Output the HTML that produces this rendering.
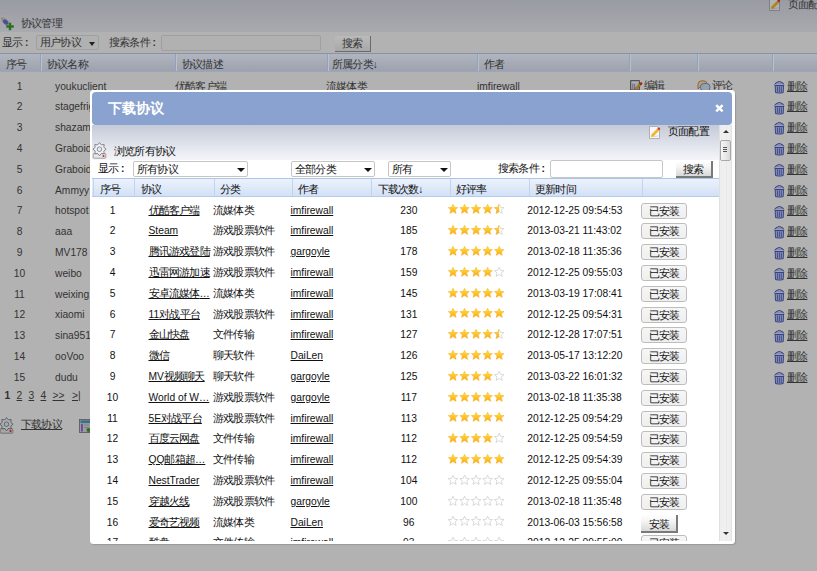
<!DOCTYPE html><html><head><meta charset="utf-8"><style>
*{margin:0;padding:0;box-sizing:border-box}
html,body{width:817px;height:571px;overflow:hidden;background:#b2b2b2;font-family:"Liberation Sans",sans-serif;font-size:10.25px;color:#333}
.k{font-size:11px;letter-spacing:-0.8px}
#mcont .k{-webkit-text-stroke:0}
#mhead .k{-webkit-text-stroke:0;font-size:inherit;letter-spacing:0}
.a{position:absolute;white-space:nowrap;line-height:13px}
.i{position:absolute;line-height:0}
.dim{filter:brightness(0.72)}
u{text-decoration:underline}
.c{margin-left:2.6px;font-weight:bold}
#topbar{position:absolute;left:0;top:0;width:817px;height:32px;background:linear-gradient(#999ba3,#a9aaaf)}
#bhead{position:absolute;left:0;top:53px;width:817px;height:19px;background:linear-gradient(#b1b5bf,#9da2ad);border-top:1px solid #8a93a6;border-bottom:1px solid #9aa6bb}
.bsep{position:absolute;top:54px;width:1px;height:17px;background:#8fa2c2;box-shadow:1px 0 0 #bcc0c8}
.bsel{position:absolute;border:1px solid #a0a0a0;background:#b1b1b1;border-radius:2px}
#modal{position:absolute;left:90px;top:90px;width:645px;height:453.5px;background:#fff;border-radius:3.5px;box-shadow:1px 1px 1px rgba(0,0,0,0.14)}
#mhead{position:absolute;left:2px;top:2px;width:640px;height:33px;background:#8aa2d0;border-radius:4px}
#mcont{position:absolute;left:2px;top:35px;width:627px;height:416px;overflow:hidden;background:#fff;color:#111}
#grad{position:absolute;left:0;top:0;width:627px;height:35px;background:linear-gradient(#c5cad8,#e6e9f0 70%,#f4f5f8)}
#sb{position:absolute;left:629px;top:35px;width:13px;height:415.5px;background:linear-gradient(90deg,#e0e0e0 0,#e0e0e0 1px,#eeeeee 1px,#f0f0f0 7px,#e8e8e8 7px,#e8e8e8 8px,#f0f0f0 8px,#ececec 12px,#e2e2e2 12px)}
#mth{position:absolute;left:0;top:53px;width:627px;height:19px;background:linear-gradient(#ecf2fc,#d2e1f6);border-top:1px solid #adc6ec;border-bottom:1px solid #b5cbee}
.msep{position:absolute;top:54px;width:1px;height:17px;background:#c2d3ee}
.sel{position:absolute;border:1px solid #c6c6c6;background:#fff;border-radius:2px;height:16px}
.arr{position:absolute;width:0;height:0;border-left:4px solid transparent;border-right:4px solid transparent;border-top:4px solid #111}
.btn1{position:absolute;width:46px;height:16px;border:1px solid #bdbdbd;border-radius:3px;background:linear-gradient(#f6f6f6,#efefef);color:#111;text-align:center;line-height:14px}
.btn2{position:absolute;height:18px;background:linear-gradient(#ffffff,#f4f4f4 40%,#d9d9d9);border-right:2px solid #7a7a7a;border-bottom:2px solid #7a7a7a;color:#111;text-align:center;line-height:18px}
</style></head><body>
<svg width="0" height="0" style="position:absolute"><defs><linearGradient id="sg" x1="0" y1="0" x2="0" y2="1"><stop offset="0" stop-color="#ffe83c"/><stop offset="1" stop-color="#ffa21a"/></linearGradient><clipPath id="hc"><rect x="-1" y="0" width="6" height="10"/></clipPath></defs></svg>
<div id="topbar"></div>
<div class="i dim" style="left:0;top:12px"><svg width="16" height="20" viewBox="0 0 16 20"><path d="M0.3,5.5 L1.8,4 L5,4.2 L11.5,10.5 L6.5,15.5 L0.3,9 Z" fill="#d8d8d0" stroke="#efefe6" stroke-width="0.9"/><circle cx="2.2" cy="6.6" r="0.9" fill="#aaa"/><ellipse cx="5.6" cy="10" rx="3.2" ry="2.1" transform="rotate(45 5.6 10)" fill="#6f68e0"/><path d="M6.3,14.5 H13.8 M10,10.8 V18.2" stroke="#3f9a2c" stroke-width="2.4"/></svg></div>
<div class="a" style="left:21px;top:17px"><span class="k">协议管理</span></div>
<div class="i dim" style="left:769px;top:-2px"><svg width="12" height="13" viewBox="0 0 12 13"><path d="M0.5,0.5 H8 L10.5,3 V12.5 H0.5 Z" fill="#f7f8fb" stroke="#a2a2a2" stroke-width="0.8"/><path d="M3,11 L9.5,9.8" stroke="#c8ccd8" stroke-width="0.8"/><path d="M2.2,10.8 L2.9,8.4 L8.3,3 L9.9,4.6 L4.5,10 Z" fill="#f8b81c" stroke="#e09a10" stroke-width="0.5"/><path d="M2.2,10.8 L2.6,9.5 L3.5,10.4 Z" fill="#e8e070"/><circle cx="9.8" cy="2.8" r="1.3" fill="#e03030"/></svg></div>
<div class="a" style="left:788px;top:-2.5px"><span class="k">页面配置</span></div>
<div class="a" style="left:2px;top:36px"><span class="k">显示</span><span class="c">:</span></div>
<div class="bsel" style="left:36px;top:35px;width:63px;height:15px"></div><div class="a" style="left:40px;top:36px"><span class="k">用户协议</span></div><div class="arr" style="left:89px;top:42px;border-top-color:#222;border-left-width:3.5px;border-right-width:3.5px"></div>
<div class="a" style="left:109px;top:36px"><span class="k">搜索条件</span><span class="c">:</span></div>
<div class="bsel" style="left:161px;top:35px;width:160px;height:16px"></div>
<div class="a" style="left:335px;top:36px;width:36px;height:16px;background:linear-gradient(#bababa,#a8a8a8);border-right:1px solid #6a6a6a;border-bottom:1px solid #6a6a6a;text-align:center;line-height:15px"><span class="k">搜索</span></div>
<div id="bhead"></div>
<div class="bsep" style="left:40px"></div>
<div class="bsep" style="left:175px"></div>
<div class="bsep" style="left:326.5px"></div>
<div class="bsep" style="left:477px"></div>
<div class="bsep" style="left:628.5px"></div>
<div class="bsep" style="left:696.5px"></div>
<div class="bsep" style="left:772px"></div>
<div class="a" style="left:6px;top:57.5px"><span class="k">序号</span></div>
<div class="a" style="left:47px;top:57.5px"><span class="k">协议名称</span></div>
<div class="a" style="left:182px;top:57.5px"><span class="k">协议描述</span></div>
<div class="a" style="left:332px;top:57.5px"><span class="k">所属分类</span>↓</div>
<div class="a" style="left:484px;top:57.5px"><span class="k">作者</span></div>
<div class="a" style="left:0;width:39px;text-align:center;top:79.60px">1</div>
<div class="a" style="left:55px;top:79.60px">youkuclient</div>
<div class="i dim" style="left:773.8px;top:80.80px"><svg width="11" height="13" viewBox="0 0 11 13"><path d="M0.8,4.3 Q0.8,1.6 3.5,1.1 Q4.2,0.3 5.3,0.3 Q6.4,0.3 7,1.1 Q9.8,1.6 9.9,4.3 Z" fill="#b9c2ee" stroke="#3c4cb4" stroke-width="0.9"/><path d="M0.9,3.6 H9.8" stroke="#f4f6ff" stroke-width="0.8"/><path d="M1.2,4.6 L9.5,4.6 L9.2,11.6 Q5.3,12.6 1.5,11.6 Z" fill="#c4ccf2" stroke="#3c4cb4" stroke-width="0.9"/><path d="M3.4,5.5 V11 M5.35,5.5 V11.3 M7.3,5.5 V11" stroke="#4a5ac8" stroke-width="0.9"/></svg></div>
<div class="a" style="left:787px;top:79.60px"><u><span class="k">删除</span></u></div>
<div class="a" style="left:0;width:39px;text-align:center;top:100.40px">2</div>
<div class="a" style="left:55px;top:100.40px">stagefright</div>
<div class="i dim" style="left:773.8px;top:101.60px"><svg width="11" height="13" viewBox="0 0 11 13"><path d="M0.8,4.3 Q0.8,1.6 3.5,1.1 Q4.2,0.3 5.3,0.3 Q6.4,0.3 7,1.1 Q9.8,1.6 9.9,4.3 Z" fill="#b9c2ee" stroke="#3c4cb4" stroke-width="0.9"/><path d="M0.9,3.6 H9.8" stroke="#f4f6ff" stroke-width="0.8"/><path d="M1.2,4.6 L9.5,4.6 L9.2,11.6 Q5.3,12.6 1.5,11.6 Z" fill="#c4ccf2" stroke="#3c4cb4" stroke-width="0.9"/><path d="M3.4,5.5 V11 M5.35,5.5 V11.3 M7.3,5.5 V11" stroke="#4a5ac8" stroke-width="0.9"/></svg></div>
<div class="a" style="left:787px;top:100.40px"><u><span class="k">删除</span></u></div>
<div class="a" style="left:0;width:39px;text-align:center;top:121.20px">3</div>
<div class="a" style="left:55px;top:121.20px">shazam</div>
<div class="i dim" style="left:773.8px;top:122.40px"><svg width="11" height="13" viewBox="0 0 11 13"><path d="M0.8,4.3 Q0.8,1.6 3.5,1.1 Q4.2,0.3 5.3,0.3 Q6.4,0.3 7,1.1 Q9.8,1.6 9.9,4.3 Z" fill="#b9c2ee" stroke="#3c4cb4" stroke-width="0.9"/><path d="M0.9,3.6 H9.8" stroke="#f4f6ff" stroke-width="0.8"/><path d="M1.2,4.6 L9.5,4.6 L9.2,11.6 Q5.3,12.6 1.5,11.6 Z" fill="#c4ccf2" stroke="#3c4cb4" stroke-width="0.9"/><path d="M3.4,5.5 V11 M5.35,5.5 V11.3 M7.3,5.5 V11" stroke="#4a5ac8" stroke-width="0.9"/></svg></div>
<div class="a" style="left:787px;top:121.20px"><u><span class="k">删除</span></u></div>
<div class="a" style="left:0;width:39px;text-align:center;top:142.00px">4</div>
<div class="a" style="left:55px;top:142.00px">Graboid</div>
<div class="i dim" style="left:773.8px;top:143.20px"><svg width="11" height="13" viewBox="0 0 11 13"><path d="M0.8,4.3 Q0.8,1.6 3.5,1.1 Q4.2,0.3 5.3,0.3 Q6.4,0.3 7,1.1 Q9.8,1.6 9.9,4.3 Z" fill="#b9c2ee" stroke="#3c4cb4" stroke-width="0.9"/><path d="M0.9,3.6 H9.8" stroke="#f4f6ff" stroke-width="0.8"/><path d="M1.2,4.6 L9.5,4.6 L9.2,11.6 Q5.3,12.6 1.5,11.6 Z" fill="#c4ccf2" stroke="#3c4cb4" stroke-width="0.9"/><path d="M3.4,5.5 V11 M5.35,5.5 V11.3 M7.3,5.5 V11" stroke="#4a5ac8" stroke-width="0.9"/></svg></div>
<div class="a" style="left:787px;top:142.00px"><u><span class="k">删除</span></u></div>
<div class="a" style="left:0;width:39px;text-align:center;top:162.80px">5</div>
<div class="a" style="left:55px;top:162.80px">Graboid</div>
<div class="i dim" style="left:773.8px;top:164.00px"><svg width="11" height="13" viewBox="0 0 11 13"><path d="M0.8,4.3 Q0.8,1.6 3.5,1.1 Q4.2,0.3 5.3,0.3 Q6.4,0.3 7,1.1 Q9.8,1.6 9.9,4.3 Z" fill="#b9c2ee" stroke="#3c4cb4" stroke-width="0.9"/><path d="M0.9,3.6 H9.8" stroke="#f4f6ff" stroke-width="0.8"/><path d="M1.2,4.6 L9.5,4.6 L9.2,11.6 Q5.3,12.6 1.5,11.6 Z" fill="#c4ccf2" stroke="#3c4cb4" stroke-width="0.9"/><path d="M3.4,5.5 V11 M5.35,5.5 V11.3 M7.3,5.5 V11" stroke="#4a5ac8" stroke-width="0.9"/></svg></div>
<div class="a" style="left:787px;top:162.80px"><u><span class="k">删除</span></u></div>
<div class="a" style="left:0;width:39px;text-align:center;top:183.60px">6</div>
<div class="a" style="left:55px;top:183.60px">Ammyy</div>
<div class="i dim" style="left:773.8px;top:184.80px"><svg width="11" height="13" viewBox="0 0 11 13"><path d="M0.8,4.3 Q0.8,1.6 3.5,1.1 Q4.2,0.3 5.3,0.3 Q6.4,0.3 7,1.1 Q9.8,1.6 9.9,4.3 Z" fill="#b9c2ee" stroke="#3c4cb4" stroke-width="0.9"/><path d="M0.9,3.6 H9.8" stroke="#f4f6ff" stroke-width="0.8"/><path d="M1.2,4.6 L9.5,4.6 L9.2,11.6 Q5.3,12.6 1.5,11.6 Z" fill="#c4ccf2" stroke="#3c4cb4" stroke-width="0.9"/><path d="M3.4,5.5 V11 M5.35,5.5 V11.3 M7.3,5.5 V11" stroke="#4a5ac8" stroke-width="0.9"/></svg></div>
<div class="a" style="left:787px;top:183.60px"><u><span class="k">删除</span></u></div>
<div class="a" style="left:0;width:39px;text-align:center;top:204.40px">7</div>
<div class="a" style="left:55px;top:204.40px">hotspot</div>
<div class="i dim" style="left:773.8px;top:205.60px"><svg width="11" height="13" viewBox="0 0 11 13"><path d="M0.8,4.3 Q0.8,1.6 3.5,1.1 Q4.2,0.3 5.3,0.3 Q6.4,0.3 7,1.1 Q9.8,1.6 9.9,4.3 Z" fill="#b9c2ee" stroke="#3c4cb4" stroke-width="0.9"/><path d="M0.9,3.6 H9.8" stroke="#f4f6ff" stroke-width="0.8"/><path d="M1.2,4.6 L9.5,4.6 L9.2,11.6 Q5.3,12.6 1.5,11.6 Z" fill="#c4ccf2" stroke="#3c4cb4" stroke-width="0.9"/><path d="M3.4,5.5 V11 M5.35,5.5 V11.3 M7.3,5.5 V11" stroke="#4a5ac8" stroke-width="0.9"/></svg></div>
<div class="a" style="left:787px;top:204.40px"><u><span class="k">删除</span></u></div>
<div class="a" style="left:0;width:39px;text-align:center;top:225.20px">8</div>
<div class="a" style="left:55px;top:225.20px">aaa</div>
<div class="i dim" style="left:773.8px;top:226.40px"><svg width="11" height="13" viewBox="0 0 11 13"><path d="M0.8,4.3 Q0.8,1.6 3.5,1.1 Q4.2,0.3 5.3,0.3 Q6.4,0.3 7,1.1 Q9.8,1.6 9.9,4.3 Z" fill="#b9c2ee" stroke="#3c4cb4" stroke-width="0.9"/><path d="M0.9,3.6 H9.8" stroke="#f4f6ff" stroke-width="0.8"/><path d="M1.2,4.6 L9.5,4.6 L9.2,11.6 Q5.3,12.6 1.5,11.6 Z" fill="#c4ccf2" stroke="#3c4cb4" stroke-width="0.9"/><path d="M3.4,5.5 V11 M5.35,5.5 V11.3 M7.3,5.5 V11" stroke="#4a5ac8" stroke-width="0.9"/></svg></div>
<div class="a" style="left:787px;top:225.20px"><u><span class="k">删除</span></u></div>
<div class="a" style="left:0;width:39px;text-align:center;top:246.00px">9</div>
<div class="a" style="left:55px;top:246.00px">MV178</div>
<div class="i dim" style="left:773.8px;top:247.20px"><svg width="11" height="13" viewBox="0 0 11 13"><path d="M0.8,4.3 Q0.8,1.6 3.5,1.1 Q4.2,0.3 5.3,0.3 Q6.4,0.3 7,1.1 Q9.8,1.6 9.9,4.3 Z" fill="#b9c2ee" stroke="#3c4cb4" stroke-width="0.9"/><path d="M0.9,3.6 H9.8" stroke="#f4f6ff" stroke-width="0.8"/><path d="M1.2,4.6 L9.5,4.6 L9.2,11.6 Q5.3,12.6 1.5,11.6 Z" fill="#c4ccf2" stroke="#3c4cb4" stroke-width="0.9"/><path d="M3.4,5.5 V11 M5.35,5.5 V11.3 M7.3,5.5 V11" stroke="#4a5ac8" stroke-width="0.9"/></svg></div>
<div class="a" style="left:787px;top:246.00px"><u><span class="k">删除</span></u></div>
<div class="a" style="left:0;width:39px;text-align:center;top:266.80px">10</div>
<div class="a" style="left:55px;top:266.80px">weibo</div>
<div class="i dim" style="left:773.8px;top:268.00px"><svg width="11" height="13" viewBox="0 0 11 13"><path d="M0.8,4.3 Q0.8,1.6 3.5,1.1 Q4.2,0.3 5.3,0.3 Q6.4,0.3 7,1.1 Q9.8,1.6 9.9,4.3 Z" fill="#b9c2ee" stroke="#3c4cb4" stroke-width="0.9"/><path d="M0.9,3.6 H9.8" stroke="#f4f6ff" stroke-width="0.8"/><path d="M1.2,4.6 L9.5,4.6 L9.2,11.6 Q5.3,12.6 1.5,11.6 Z" fill="#c4ccf2" stroke="#3c4cb4" stroke-width="0.9"/><path d="M3.4,5.5 V11 M5.35,5.5 V11.3 M7.3,5.5 V11" stroke="#4a5ac8" stroke-width="0.9"/></svg></div>
<div class="a" style="left:787px;top:266.80px"><u><span class="k">删除</span></u></div>
<div class="a" style="left:0;width:39px;text-align:center;top:287.60px">11</div>
<div class="a" style="left:55px;top:287.60px">weixing</div>
<div class="i dim" style="left:773.8px;top:288.80px"><svg width="11" height="13" viewBox="0 0 11 13"><path d="M0.8,4.3 Q0.8,1.6 3.5,1.1 Q4.2,0.3 5.3,0.3 Q6.4,0.3 7,1.1 Q9.8,1.6 9.9,4.3 Z" fill="#b9c2ee" stroke="#3c4cb4" stroke-width="0.9"/><path d="M0.9,3.6 H9.8" stroke="#f4f6ff" stroke-width="0.8"/><path d="M1.2,4.6 L9.5,4.6 L9.2,11.6 Q5.3,12.6 1.5,11.6 Z" fill="#c4ccf2" stroke="#3c4cb4" stroke-width="0.9"/><path d="M3.4,5.5 V11 M5.35,5.5 V11.3 M7.3,5.5 V11" stroke="#4a5ac8" stroke-width="0.9"/></svg></div>
<div class="a" style="left:787px;top:287.60px"><u><span class="k">删除</span></u></div>
<div class="a" style="left:0;width:39px;text-align:center;top:308.40px">12</div>
<div class="a" style="left:55px;top:308.40px">xiaomi</div>
<div class="i dim" style="left:773.8px;top:309.60px"><svg width="11" height="13" viewBox="0 0 11 13"><path d="M0.8,4.3 Q0.8,1.6 3.5,1.1 Q4.2,0.3 5.3,0.3 Q6.4,0.3 7,1.1 Q9.8,1.6 9.9,4.3 Z" fill="#b9c2ee" stroke="#3c4cb4" stroke-width="0.9"/><path d="M0.9,3.6 H9.8" stroke="#f4f6ff" stroke-width="0.8"/><path d="M1.2,4.6 L9.5,4.6 L9.2,11.6 Q5.3,12.6 1.5,11.6 Z" fill="#c4ccf2" stroke="#3c4cb4" stroke-width="0.9"/><path d="M3.4,5.5 V11 M5.35,5.5 V11.3 M7.3,5.5 V11" stroke="#4a5ac8" stroke-width="0.9"/></svg></div>
<div class="a" style="left:787px;top:308.40px"><u><span class="k">删除</span></u></div>
<div class="a" style="left:0;width:39px;text-align:center;top:329.20px">13</div>
<div class="a" style="left:55px;top:329.20px">sina951</div>
<div class="i dim" style="left:773.8px;top:330.40px"><svg width="11" height="13" viewBox="0 0 11 13"><path d="M0.8,4.3 Q0.8,1.6 3.5,1.1 Q4.2,0.3 5.3,0.3 Q6.4,0.3 7,1.1 Q9.8,1.6 9.9,4.3 Z" fill="#b9c2ee" stroke="#3c4cb4" stroke-width="0.9"/><path d="M0.9,3.6 H9.8" stroke="#f4f6ff" stroke-width="0.8"/><path d="M1.2,4.6 L9.5,4.6 L9.2,11.6 Q5.3,12.6 1.5,11.6 Z" fill="#c4ccf2" stroke="#3c4cb4" stroke-width="0.9"/><path d="M3.4,5.5 V11 M5.35,5.5 V11.3 M7.3,5.5 V11" stroke="#4a5ac8" stroke-width="0.9"/></svg></div>
<div class="a" style="left:787px;top:329.20px"><u><span class="k">删除</span></u></div>
<div class="a" style="left:0;width:39px;text-align:center;top:350.00px">14</div>
<div class="a" style="left:55px;top:350.00px">ooVoo</div>
<div class="i dim" style="left:773.8px;top:351.20px"><svg width="11" height="13" viewBox="0 0 11 13"><path d="M0.8,4.3 Q0.8,1.6 3.5,1.1 Q4.2,0.3 5.3,0.3 Q6.4,0.3 7,1.1 Q9.8,1.6 9.9,4.3 Z" fill="#b9c2ee" stroke="#3c4cb4" stroke-width="0.9"/><path d="M0.9,3.6 H9.8" stroke="#f4f6ff" stroke-width="0.8"/><path d="M1.2,4.6 L9.5,4.6 L9.2,11.6 Q5.3,12.6 1.5,11.6 Z" fill="#c4ccf2" stroke="#3c4cb4" stroke-width="0.9"/><path d="M3.4,5.5 V11 M5.35,5.5 V11.3 M7.3,5.5 V11" stroke="#4a5ac8" stroke-width="0.9"/></svg></div>
<div class="a" style="left:787px;top:350.00px"><u><span class="k">删除</span></u></div>
<div class="a" style="left:0;width:39px;text-align:center;top:370.80px">15</div>
<div class="a" style="left:55px;top:370.80px">dudu</div>
<div class="i dim" style="left:773.8px;top:372.00px"><svg width="11" height="13" viewBox="0 0 11 13"><path d="M0.8,4.3 Q0.8,1.6 3.5,1.1 Q4.2,0.3 5.3,0.3 Q6.4,0.3 7,1.1 Q9.8,1.6 9.9,4.3 Z" fill="#b9c2ee" stroke="#3c4cb4" stroke-width="0.9"/><path d="M0.9,3.6 H9.8" stroke="#f4f6ff" stroke-width="0.8"/><path d="M1.2,4.6 L9.5,4.6 L9.2,11.6 Q5.3,12.6 1.5,11.6 Z" fill="#c4ccf2" stroke="#3c4cb4" stroke-width="0.9"/><path d="M3.4,5.5 V11 M5.35,5.5 V11.3 M7.3,5.5 V11" stroke="#4a5ac8" stroke-width="0.9"/></svg></div>
<div class="a" style="left:787px;top:370.80px"><u><span class="k">删除</span></u></div>
<div class="a" style="left:175px;top:79.6px"><span class="k">优酷客户端</span></div><div class="a" style="left:326px;top:79.6px"><span class="k">流媒体类</span></div><div class="a" style="left:477px;top:79.6px">imfirewall</div>
<div class="i dim" style="left:629.5px;top:80.3px"><svg width="14" height="11" viewBox="0 0 14 11"><rect x="0.7" y="0.7" width="8.6" height="9.3" fill="#e4e6ee" stroke="#4a4a4a" stroke-width="0.9"/><path d="M1.6,2.3 H8.4" stroke="#fafafa" stroke-width="0.9"/><path d="M2.8,3.5 V9.5 M4.5,4 V9.5" stroke="#8f86d8" stroke-width="0.9"/><path d="M4.6,10.3 L5.1,8.3 L9.8,3.6 L11.2,5 L6.5,9.7 Z" fill="#f0b020" stroke="#a07010" stroke-width="0.5"/><circle cx="11" cy="3.6" r="1.3" fill="#e02a2a"/></svg></div><div class="a" style="left:643.5px;top:79px"><span class="k">编辑</span></div>
<div class="i dim" style="left:696.5px;top:79.5px"><svg width="14" height="12" viewBox="0 0 14 12"><path d="M1,9 V4 Q1,0.8 5,0.8 H6.5 Q10,0.8 10,4 V6 H4 L1,9 Z" fill="#f0e2b0" stroke="#e07a40" stroke-width="0.9"/><rect x="3.5" y="3.5" width="9.5" height="7.5" rx="3.5" fill="#cfe0ee" stroke="#5a90d0" stroke-width="0.9"/></svg></div><div class="a" style="left:711.5px;top:79px"><span class="k">评论</span></div>
<div class="a" style="left:4.5px;top:388.5px"><b>1</b></div>
<div class="a" style="left:16.5px;top:388.5px"><u>2</u></div>
<div class="a" style="left:28.5px;top:388.5px"><u>3</u></div>
<div class="a" style="left:40.5px;top:388.5px"><u>4</u></div>
<div class="a" style="left:52.5px;top:388.5px"><u>&gt;&gt;</u></div>
<div class="a" style="left:72px;top:388.5px"><u>&gt;|</u></div>
<div class="i dim" style="left:-1px;top:417px"><svg width="16" height="17" viewBox="0 0 16 17"><rect x="1.2" y="11.6" width="12.6" height="4.6" rx="0.8" fill="#e8e8e8" stroke="#8a8a8a" stroke-width="0.8"/><circle cx="11.5" cy="14" r="1.1" fill="#e02828"/><polygon points="7.50,0.60 9.30,2.86 12.17,2.53 11.84,5.40 14.10,7.20 11.84,9.00 12.17,11.87 9.30,11.54 7.50,13.80 5.70,11.54 2.83,11.87 3.16,9.00 0.90,7.20 3.16,5.40 2.83,2.53 5.70,2.86" fill="#eef1f9" stroke="#6e6e6e" stroke-width="0.8" stroke-linejoin="round"/><circle cx="7.5" cy="7.2" r="2.3" fill="#e4eaf8" stroke="#7a7a7a" stroke-width="0.8"/></svg></div>
<div class="a" style="left:21px;top:417.5px"><u><span class="k">下载协议</span></u></div>
<div class="i dim" style="left:79px;top:419px"><svg width="12" height="14" viewBox="0 0 12 14"><rect x="0.5" y="0.5" width="11" height="13" fill="#d7d7d7" stroke="#777" stroke-width="0.8"/><rect x="1.5" y="1.3" width="9.5" height="2.8" fill="#4aa0c0"/><rect x="2" y="5" width="1.8" height="7.5" fill="#9560e0"/><path d="M5,6 H10 M5,8.5 H10" stroke="#aaa" stroke-width="0.8"/><circle cx="9.5" cy="11" r="2" fill="#3a9a3a"/></svg></div>
<div id="modal">
<div id="mhead"><div class="a" style="left:16px;top:8px;font-size:14.2px;font-weight:bold;color:#fff;line-height:17px"><span class="k">下载协议</span></div><svg style="position:absolute;left:622.5px;top:12px" width="9" height="9" viewBox="0 0 9 9"><path d="M1.2,1.2 L7.6,7.3 M7.6,1.2 L1.2,7.3" stroke="#fff" stroke-width="2.5"/></svg></div>
<div id="mcont"><div id="grad"></div>
<div class="i" style="left:557px;top:1px"><svg width="12" height="13" viewBox="0 0 12 13"><path d="M0.5,0.5 H8 L10.5,3 V12.5 H0.5 Z" fill="#f7f8fb" stroke="#a2a2a2" stroke-width="0.8"/><path d="M3,11 L9.5,9.8" stroke="#c8ccd8" stroke-width="0.8"/><path d="M2.2,10.8 L2.9,8.4 L8.3,3 L9.9,4.6 L4.5,10 Z" fill="#f8b81c" stroke="#e09a10" stroke-width="0.5"/><path d="M2.2,10.8 L2.6,9.5 L3.5,10.4 Z" fill="#e8e070"/><circle cx="9.8" cy="2.8" r="1.3" fill="#e03030"/></svg></div>
<div class="a" style="left:576px;top:-0.5px"><span class="k">页面配置</span></div>
<div class="i" style="left:0px;top:17px"><svg width="16" height="17" viewBox="0 0 16 17"><rect x="1.2" y="11.6" width="12.6" height="4.6" rx="0.8" fill="#e8e8e8" stroke="#8a8a8a" stroke-width="0.8"/><circle cx="11.5" cy="14" r="1.1" fill="#e02828"/><polygon points="7.50,0.60 9.30,2.86 12.17,2.53 11.84,5.40 14.10,7.20 11.84,9.00 12.17,11.87 9.30,11.54 7.50,13.80 5.70,11.54 2.83,11.87 3.16,9.00 0.90,7.20 3.16,5.40 2.83,2.53 5.70,2.86" fill="#eef1f9" stroke="#6e6e6e" stroke-width="0.8" stroke-linejoin="round"/><circle cx="7.5" cy="7.2" r="2.3" fill="#e4eaf8" stroke="#7a7a7a" stroke-width="0.8"/></svg></div>
<div class="a" style="left:22px;top:19.5px"><span class="k">浏览所有协议</span></div>
<div class="a" style="left:6px;top:36.5px"><span class="k">显示</span><span class="c">:</span></div>
<div class="sel" style="left:41px;top:36px;width:115px"></div><div class="a" style="left:45px;top:38px"><span class="k">所有协议</span></div><div class="arr" style="left:145px;top:43px"></div>
<div class="sel" style="left:198.5px;top:36px;width:84px"></div><div class="a" style="left:203px;top:38px"><span class="k">全部分类</span></div><div class="arr" style="left:272px;top:43px"></div>
<div class="sel" style="left:296px;top:36px;width:63px"></div><div class="a" style="left:300px;top:38px"><span class="k">所有</span></div><div class="arr" style="left:348px;top:43px"></div>
<div class="a" style="left:406px;top:36.5px"><span class="k">搜索条件</span><span class="c">:</span></div>
<div class="sel" style="left:458px;top:35px;width:113px;height:18px"></div>
<div class="btn2" style="left:584px;top:36px;width:37px;height:17px;line-height:17px"><span class="k">搜索</span></div>
<div id="mth"></div>
<div class="msep" style="left:1px"></div>
<div class="msep" style="left:42px"></div>
<div class="msep" style="left:122px"></div>
<div class="msep" style="left:200px"></div>
<div class="msep" style="left:279px"></div>
<div class="msep" style="left:358px"></div>
<div class="msep" style="left:437px"></div>
<div class="msep" style="left:550px"></div>
<div class="a" style="left:8px;top:57.5px"><span class="k">序号</span></div>
<div class="a" style="left:48.5px;top:57.5px"><span class="k">协议</span></div>
<div class="a" style="left:128px;top:57.5px"><span class="k">分类</span></div>
<div class="a" style="left:206px;top:57.5px"><span class="k">作者</span></div>
<div class="a" style="left:285.5px;top:57.5px"><span class="k">下载次数</span>↓</div>
<div class="a" style="left:364px;top:57.5px"><span class="k">好评率</span></div>
<div class="a" style="left:443px;top:57.5px"><span class="k">更新时间</span></div>
<div class="a" style="left:0;width:41px;text-align:center;top:78.50px">1</div>
<div class="a" style="left:56.5px;top:78.50px"><u><span class="k">优酷客户端</span></u></div>
<div class="a" style="left:121px;top:78.50px"><span class="k">流媒体类</span></div>
<div class="a" style="left:198.5px;top:78.50px"><u>imfirewall</u></div>
<div class="a" style="left:286.8px;width:60px;text-align:center;top:78.50px">230</div>
<div class="i" style="left:355.5px;top:79.30px"><svg width="58" height="10" viewBox="0 0 58 10"><polygon transform="translate(0.00,0)" points="5,0.2 6.4,3.3 9.8,3.6 7.2,5.9 8.1,9.4 5,7.6 1.9,9.4 2.8,5.9 0.2,3.6 3.6,3.3" fill="url(#sg)" stroke="#f5b324" stroke-width="0.5"/><polygon transform="translate(11.55,0)" points="5,0.2 6.4,3.3 9.8,3.6 7.2,5.9 8.1,9.4 5,7.6 1.9,9.4 2.8,5.9 0.2,3.6 3.6,3.3" fill="url(#sg)" stroke="#f5b324" stroke-width="0.5"/><polygon transform="translate(23.10,0)" points="5,0.2 6.4,3.3 9.8,3.6 7.2,5.9 8.1,9.4 5,7.6 1.9,9.4 2.8,5.9 0.2,3.6 3.6,3.3" fill="url(#sg)" stroke="#f5b324" stroke-width="0.5"/><polygon transform="translate(34.65,0)" points="5,0.2 6.4,3.3 9.8,3.6 7.2,5.9 8.1,9.4 5,7.6 1.9,9.4 2.8,5.9 0.2,3.6 3.6,3.3" fill="url(#sg)" stroke="#f5b324" stroke-width="0.5"/><polygon transform="translate(46.20,0)" points="5,0.2 6.4,3.3 9.8,3.6 7.2,5.9 8.1,9.4 5,7.6 1.9,9.4 2.8,5.9 0.2,3.6 3.6,3.3" fill="#fff" stroke="#c9cdcd" stroke-width="0.7"/><polygon transform="translate(46.20,0)" points="5,0.2 6.4,3.3 9.8,3.6 7.2,5.9 8.1,9.4 5,7.6 1.9,9.4 2.8,5.9 0.2,3.6 3.6,3.3" fill="url(#sg)" stroke="#f5b324" stroke-width="0.5" clip-path="url(#hc)"/></svg></div>
<div class="a" style="left:435.3px;top:78.50px">2012-12-25 09:54:53</div>
<div class="btn1" style="left:549px;top:77.50px"><span class="k">已安装</span></div>
<div class="a" style="left:0;width:41px;text-align:center;top:99.30px">2</div>
<div class="a" style="left:56.5px;top:99.30px"><u>Steam</u></div>
<div class="a" style="left:121px;top:99.30px"><span class="k">游戏股票软件</span></div>
<div class="a" style="left:198.5px;top:99.30px"><u>imfirewall</u></div>
<div class="a" style="left:286.8px;width:60px;text-align:center;top:99.30px">185</div>
<div class="i" style="left:355.5px;top:100.10px"><svg width="58" height="10" viewBox="0 0 58 10"><polygon transform="translate(0.00,0)" points="5,0.2 6.4,3.3 9.8,3.6 7.2,5.9 8.1,9.4 5,7.6 1.9,9.4 2.8,5.9 0.2,3.6 3.6,3.3" fill="url(#sg)" stroke="#f5b324" stroke-width="0.5"/><polygon transform="translate(11.55,0)" points="5,0.2 6.4,3.3 9.8,3.6 7.2,5.9 8.1,9.4 5,7.6 1.9,9.4 2.8,5.9 0.2,3.6 3.6,3.3" fill="url(#sg)" stroke="#f5b324" stroke-width="0.5"/><polygon transform="translate(23.10,0)" points="5,0.2 6.4,3.3 9.8,3.6 7.2,5.9 8.1,9.4 5,7.6 1.9,9.4 2.8,5.9 0.2,3.6 3.6,3.3" fill="url(#sg)" stroke="#f5b324" stroke-width="0.5"/><polygon transform="translate(34.65,0)" points="5,0.2 6.4,3.3 9.8,3.6 7.2,5.9 8.1,9.4 5,7.6 1.9,9.4 2.8,5.9 0.2,3.6 3.6,3.3" fill="url(#sg)" stroke="#f5b324" stroke-width="0.5"/><polygon transform="translate(46.20,0)" points="5,0.2 6.4,3.3 9.8,3.6 7.2,5.9 8.1,9.4 5,7.6 1.9,9.4 2.8,5.9 0.2,3.6 3.6,3.3" fill="#fff" stroke="#c9cdcd" stroke-width="0.7"/><polygon transform="translate(46.20,0)" points="5,0.2 6.4,3.3 9.8,3.6 7.2,5.9 8.1,9.4 5,7.6 1.9,9.4 2.8,5.9 0.2,3.6 3.6,3.3" fill="url(#sg)" stroke="#f5b324" stroke-width="0.5" clip-path="url(#hc)"/></svg></div>
<div class="a" style="left:435.3px;top:99.30px">2013-03-21 11:43:02</div>
<div class="btn1" style="left:549px;top:98.30px"><span class="k">已安装</span></div>
<div class="a" style="left:0;width:41px;text-align:center;top:120.10px">3</div>
<div class="a" style="left:56.5px;top:120.10px"><u><span class="k">腾讯游戏登陆</span></u></div>
<div class="a" style="left:121px;top:120.10px"><span class="k">游戏股票软件</span></div>
<div class="a" style="left:198.5px;top:120.10px"><u>gargoyle</u></div>
<div class="a" style="left:286.8px;width:60px;text-align:center;top:120.10px">178</div>
<div class="i" style="left:355.5px;top:120.90px"><svg width="58" height="10" viewBox="0 0 58 10"><polygon transform="translate(0.00,0)" points="5,0.2 6.4,3.3 9.8,3.6 7.2,5.9 8.1,9.4 5,7.6 1.9,9.4 2.8,5.9 0.2,3.6 3.6,3.3" fill="url(#sg)" stroke="#f5b324" stroke-width="0.5"/><polygon transform="translate(11.55,0)" points="5,0.2 6.4,3.3 9.8,3.6 7.2,5.9 8.1,9.4 5,7.6 1.9,9.4 2.8,5.9 0.2,3.6 3.6,3.3" fill="url(#sg)" stroke="#f5b324" stroke-width="0.5"/><polygon transform="translate(23.10,0)" points="5,0.2 6.4,3.3 9.8,3.6 7.2,5.9 8.1,9.4 5,7.6 1.9,9.4 2.8,5.9 0.2,3.6 3.6,3.3" fill="url(#sg)" stroke="#f5b324" stroke-width="0.5"/><polygon transform="translate(34.65,0)" points="5,0.2 6.4,3.3 9.8,3.6 7.2,5.9 8.1,9.4 5,7.6 1.9,9.4 2.8,5.9 0.2,3.6 3.6,3.3" fill="url(#sg)" stroke="#f5b324" stroke-width="0.5"/><polygon transform="translate(46.20,0)" points="5,0.2 6.4,3.3 9.8,3.6 7.2,5.9 8.1,9.4 5,7.6 1.9,9.4 2.8,5.9 0.2,3.6 3.6,3.3" fill="url(#sg)" stroke="#f5b324" stroke-width="0.5"/></svg></div>
<div class="a" style="left:435.3px;top:120.10px">2013-02-18 11:35:36</div>
<div class="btn1" style="left:549px;top:119.10px"><span class="k">已安装</span></div>
<div class="a" style="left:0;width:41px;text-align:center;top:140.90px">4</div>
<div class="a" style="left:56.5px;top:140.90px"><u><span class="k">迅雷网游加速</span></u></div>
<div class="a" style="left:121px;top:140.90px"><span class="k">游戏股票软件</span></div>
<div class="a" style="left:198.5px;top:140.90px"><u>imfirewall</u></div>
<div class="a" style="left:286.8px;width:60px;text-align:center;top:140.90px">159</div>
<div class="i" style="left:355.5px;top:141.70px"><svg width="58" height="10" viewBox="0 0 58 10"><polygon transform="translate(0.00,0)" points="5,0.2 6.4,3.3 9.8,3.6 7.2,5.9 8.1,9.4 5,7.6 1.9,9.4 2.8,5.9 0.2,3.6 3.6,3.3" fill="url(#sg)" stroke="#f5b324" stroke-width="0.5"/><polygon transform="translate(11.55,0)" points="5,0.2 6.4,3.3 9.8,3.6 7.2,5.9 8.1,9.4 5,7.6 1.9,9.4 2.8,5.9 0.2,3.6 3.6,3.3" fill="url(#sg)" stroke="#f5b324" stroke-width="0.5"/><polygon transform="translate(23.10,0)" points="5,0.2 6.4,3.3 9.8,3.6 7.2,5.9 8.1,9.4 5,7.6 1.9,9.4 2.8,5.9 0.2,3.6 3.6,3.3" fill="url(#sg)" stroke="#f5b324" stroke-width="0.5"/><polygon transform="translate(34.65,0)" points="5,0.2 6.4,3.3 9.8,3.6 7.2,5.9 8.1,9.4 5,7.6 1.9,9.4 2.8,5.9 0.2,3.6 3.6,3.3" fill="url(#sg)" stroke="#f5b324" stroke-width="0.5"/><polygon transform="translate(46.20,0)" points="5,0.2 6.4,3.3 9.8,3.6 7.2,5.9 8.1,9.4 5,7.6 1.9,9.4 2.8,5.9 0.2,3.6 3.6,3.3" fill="#fff" stroke="#c9cdcd" stroke-width="0.7"/></svg></div>
<div class="a" style="left:435.3px;top:140.90px">2012-12-25 09:55:03</div>
<div class="btn1" style="left:549px;top:139.90px"><span class="k">已安装</span></div>
<div class="a" style="left:0;width:41px;text-align:center;top:161.70px">5</div>
<div class="a" style="left:56.5px;top:161.70px"><u><span class="k">安卓流媒体</span>…</u></div>
<div class="a" style="left:121px;top:161.70px"><span class="k">流媒体类</span></div>
<div class="a" style="left:198.5px;top:161.70px"><u>imfirewall</u></div>
<div class="a" style="left:286.8px;width:60px;text-align:center;top:161.70px">145</div>
<div class="i" style="left:355.5px;top:162.50px"><svg width="58" height="10" viewBox="0 0 58 10"><polygon transform="translate(0.00,0)" points="5,0.2 6.4,3.3 9.8,3.6 7.2,5.9 8.1,9.4 5,7.6 1.9,9.4 2.8,5.9 0.2,3.6 3.6,3.3" fill="url(#sg)" stroke="#f5b324" stroke-width="0.5"/><polygon transform="translate(11.55,0)" points="5,0.2 6.4,3.3 9.8,3.6 7.2,5.9 8.1,9.4 5,7.6 1.9,9.4 2.8,5.9 0.2,3.6 3.6,3.3" fill="url(#sg)" stroke="#f5b324" stroke-width="0.5"/><polygon transform="translate(23.10,0)" points="5,0.2 6.4,3.3 9.8,3.6 7.2,5.9 8.1,9.4 5,7.6 1.9,9.4 2.8,5.9 0.2,3.6 3.6,3.3" fill="url(#sg)" stroke="#f5b324" stroke-width="0.5"/><polygon transform="translate(34.65,0)" points="5,0.2 6.4,3.3 9.8,3.6 7.2,5.9 8.1,9.4 5,7.6 1.9,9.4 2.8,5.9 0.2,3.6 3.6,3.3" fill="url(#sg)" stroke="#f5b324" stroke-width="0.5"/><polygon transform="translate(46.20,0)" points="5,0.2 6.4,3.3 9.8,3.6 7.2,5.9 8.1,9.4 5,7.6 1.9,9.4 2.8,5.9 0.2,3.6 3.6,3.3" fill="url(#sg)" stroke="#f5b324" stroke-width="0.5"/></svg></div>
<div class="a" style="left:435.3px;top:161.70px">2013-03-19 17:08:41</div>
<div class="btn1" style="left:549px;top:160.70px"><span class="k">已安装</span></div>
<div class="a" style="left:0;width:41px;text-align:center;top:182.50px">6</div>
<div class="a" style="left:56.5px;top:182.50px"><u>11<span class="k">对战平台</span></u></div>
<div class="a" style="left:121px;top:182.50px"><span class="k">游戏股票软件</span></div>
<div class="a" style="left:198.5px;top:182.50px"><u>imfirewall</u></div>
<div class="a" style="left:286.8px;width:60px;text-align:center;top:182.50px">131</div>
<div class="i" style="left:355.5px;top:183.30px"><svg width="58" height="10" viewBox="0 0 58 10"><polygon transform="translate(0.00,0)" points="5,0.2 6.4,3.3 9.8,3.6 7.2,5.9 8.1,9.4 5,7.6 1.9,9.4 2.8,5.9 0.2,3.6 3.6,3.3" fill="url(#sg)" stroke="#f5b324" stroke-width="0.5"/><polygon transform="translate(11.55,0)" points="5,0.2 6.4,3.3 9.8,3.6 7.2,5.9 8.1,9.4 5,7.6 1.9,9.4 2.8,5.9 0.2,3.6 3.6,3.3" fill="url(#sg)" stroke="#f5b324" stroke-width="0.5"/><polygon transform="translate(23.10,0)" points="5,0.2 6.4,3.3 9.8,3.6 7.2,5.9 8.1,9.4 5,7.6 1.9,9.4 2.8,5.9 0.2,3.6 3.6,3.3" fill="url(#sg)" stroke="#f5b324" stroke-width="0.5"/><polygon transform="translate(34.65,0)" points="5,0.2 6.4,3.3 9.8,3.6 7.2,5.9 8.1,9.4 5,7.6 1.9,9.4 2.8,5.9 0.2,3.6 3.6,3.3" fill="url(#sg)" stroke="#f5b324" stroke-width="0.5"/><polygon transform="translate(46.20,0)" points="5,0.2 6.4,3.3 9.8,3.6 7.2,5.9 8.1,9.4 5,7.6 1.9,9.4 2.8,5.9 0.2,3.6 3.6,3.3" fill="url(#sg)" stroke="#f5b324" stroke-width="0.5"/></svg></div>
<div class="a" style="left:435.3px;top:182.50px">2012-12-25 09:54:31</div>
<div class="btn1" style="left:549px;top:181.50px"><span class="k">已安装</span></div>
<div class="a" style="left:0;width:41px;text-align:center;top:203.30px">7</div>
<div class="a" style="left:56.5px;top:203.30px"><u><span class="k">金山快盘</span></u></div>
<div class="a" style="left:121px;top:203.30px"><span class="k">文件传输</span></div>
<div class="a" style="left:198.5px;top:203.30px"><u>imfirewall</u></div>
<div class="a" style="left:286.8px;width:60px;text-align:center;top:203.30px">127</div>
<div class="i" style="left:355.5px;top:204.10px"><svg width="58" height="10" viewBox="0 0 58 10"><polygon transform="translate(0.00,0)" points="5,0.2 6.4,3.3 9.8,3.6 7.2,5.9 8.1,9.4 5,7.6 1.9,9.4 2.8,5.9 0.2,3.6 3.6,3.3" fill="url(#sg)" stroke="#f5b324" stroke-width="0.5"/><polygon transform="translate(11.55,0)" points="5,0.2 6.4,3.3 9.8,3.6 7.2,5.9 8.1,9.4 5,7.6 1.9,9.4 2.8,5.9 0.2,3.6 3.6,3.3" fill="url(#sg)" stroke="#f5b324" stroke-width="0.5"/><polygon transform="translate(23.10,0)" points="5,0.2 6.4,3.3 9.8,3.6 7.2,5.9 8.1,9.4 5,7.6 1.9,9.4 2.8,5.9 0.2,3.6 3.6,3.3" fill="url(#sg)" stroke="#f5b324" stroke-width="0.5"/><polygon transform="translate(34.65,0)" points="5,0.2 6.4,3.3 9.8,3.6 7.2,5.9 8.1,9.4 5,7.6 1.9,9.4 2.8,5.9 0.2,3.6 3.6,3.3" fill="url(#sg)" stroke="#f5b324" stroke-width="0.5"/><polygon transform="translate(46.20,0)" points="5,0.2 6.4,3.3 9.8,3.6 7.2,5.9 8.1,9.4 5,7.6 1.9,9.4 2.8,5.9 0.2,3.6 3.6,3.3" fill="#fff" stroke="#c9cdcd" stroke-width="0.7"/><polygon transform="translate(46.20,0)" points="5,0.2 6.4,3.3 9.8,3.6 7.2,5.9 8.1,9.4 5,7.6 1.9,9.4 2.8,5.9 0.2,3.6 3.6,3.3" fill="url(#sg)" stroke="#f5b324" stroke-width="0.5" clip-path="url(#hc)"/></svg></div>
<div class="a" style="left:435.3px;top:203.30px">2012-12-28 17:07:51</div>
<div class="btn1" style="left:549px;top:202.30px"><span class="k">已安装</span></div>
<div class="a" style="left:0;width:41px;text-align:center;top:224.10px">8</div>
<div class="a" style="left:56.5px;top:224.10px"><u><span class="k">微信</span></u></div>
<div class="a" style="left:121px;top:224.10px"><span class="k">聊天软件</span></div>
<div class="a" style="left:198.5px;top:224.10px"><u>DaiLen</u></div>
<div class="a" style="left:286.8px;width:60px;text-align:center;top:224.10px">126</div>
<div class="i" style="left:355.5px;top:224.90px"><svg width="58" height="10" viewBox="0 0 58 10"><polygon transform="translate(0.00,0)" points="5,0.2 6.4,3.3 9.8,3.6 7.2,5.9 8.1,9.4 5,7.6 1.9,9.4 2.8,5.9 0.2,3.6 3.6,3.3" fill="url(#sg)" stroke="#f5b324" stroke-width="0.5"/><polygon transform="translate(11.55,0)" points="5,0.2 6.4,3.3 9.8,3.6 7.2,5.9 8.1,9.4 5,7.6 1.9,9.4 2.8,5.9 0.2,3.6 3.6,3.3" fill="url(#sg)" stroke="#f5b324" stroke-width="0.5"/><polygon transform="translate(23.10,0)" points="5,0.2 6.4,3.3 9.8,3.6 7.2,5.9 8.1,9.4 5,7.6 1.9,9.4 2.8,5.9 0.2,3.6 3.6,3.3" fill="url(#sg)" stroke="#f5b324" stroke-width="0.5"/><polygon transform="translate(34.65,0)" points="5,0.2 6.4,3.3 9.8,3.6 7.2,5.9 8.1,9.4 5,7.6 1.9,9.4 2.8,5.9 0.2,3.6 3.6,3.3" fill="url(#sg)" stroke="#f5b324" stroke-width="0.5"/><polygon transform="translate(46.20,0)" points="5,0.2 6.4,3.3 9.8,3.6 7.2,5.9 8.1,9.4 5,7.6 1.9,9.4 2.8,5.9 0.2,3.6 3.6,3.3" fill="url(#sg)" stroke="#f5b324" stroke-width="0.5"/></svg></div>
<div class="a" style="left:435.3px;top:224.10px">2013-05-17 13:12:20</div>
<div class="btn1" style="left:549px;top:223.10px"><span class="k">已安装</span></div>
<div class="a" style="left:0;width:41px;text-align:center;top:244.90px">9</div>
<div class="a" style="left:56.5px;top:244.90px"><u>MV<span class="k">视频聊天</span></u></div>
<div class="a" style="left:121px;top:244.90px"><span class="k">聊天软件</span></div>
<div class="a" style="left:198.5px;top:244.90px"><u>gargoyle</u></div>
<div class="a" style="left:286.8px;width:60px;text-align:center;top:244.90px">125</div>
<div class="i" style="left:355.5px;top:245.70px"><svg width="58" height="10" viewBox="0 0 58 10"><polygon transform="translate(0.00,0)" points="5,0.2 6.4,3.3 9.8,3.6 7.2,5.9 8.1,9.4 5,7.6 1.9,9.4 2.8,5.9 0.2,3.6 3.6,3.3" fill="url(#sg)" stroke="#f5b324" stroke-width="0.5"/><polygon transform="translate(11.55,0)" points="5,0.2 6.4,3.3 9.8,3.6 7.2,5.9 8.1,9.4 5,7.6 1.9,9.4 2.8,5.9 0.2,3.6 3.6,3.3" fill="url(#sg)" stroke="#f5b324" stroke-width="0.5"/><polygon transform="translate(23.10,0)" points="5,0.2 6.4,3.3 9.8,3.6 7.2,5.9 8.1,9.4 5,7.6 1.9,9.4 2.8,5.9 0.2,3.6 3.6,3.3" fill="url(#sg)" stroke="#f5b324" stroke-width="0.5"/><polygon transform="translate(34.65,0)" points="5,0.2 6.4,3.3 9.8,3.6 7.2,5.9 8.1,9.4 5,7.6 1.9,9.4 2.8,5.9 0.2,3.6 3.6,3.3" fill="url(#sg)" stroke="#f5b324" stroke-width="0.5"/><polygon transform="translate(46.20,0)" points="5,0.2 6.4,3.3 9.8,3.6 7.2,5.9 8.1,9.4 5,7.6 1.9,9.4 2.8,5.9 0.2,3.6 3.6,3.3" fill="#fff" stroke="#c9cdcd" stroke-width="0.7"/></svg></div>
<div class="a" style="left:435.3px;top:244.90px">2013-03-22 16:01:32</div>
<div class="btn1" style="left:549px;top:243.90px"><span class="k">已安装</span></div>
<div class="a" style="left:0;width:41px;text-align:center;top:265.70px">10</div>
<div class="a" style="left:56.5px;top:265.70px"><u>World of W…</u></div>
<div class="a" style="left:121px;top:265.70px"><span class="k">游戏股票软件</span></div>
<div class="a" style="left:198.5px;top:265.70px"><u>gargoyle</u></div>
<div class="a" style="left:286.8px;width:60px;text-align:center;top:265.70px">117</div>
<div class="i" style="left:355.5px;top:266.50px"><svg width="58" height="10" viewBox="0 0 58 10"><polygon transform="translate(0.00,0)" points="5,0.2 6.4,3.3 9.8,3.6 7.2,5.9 8.1,9.4 5,7.6 1.9,9.4 2.8,5.9 0.2,3.6 3.6,3.3" fill="url(#sg)" stroke="#f5b324" stroke-width="0.5"/><polygon transform="translate(11.55,0)" points="5,0.2 6.4,3.3 9.8,3.6 7.2,5.9 8.1,9.4 5,7.6 1.9,9.4 2.8,5.9 0.2,3.6 3.6,3.3" fill="url(#sg)" stroke="#f5b324" stroke-width="0.5"/><polygon transform="translate(23.10,0)" points="5,0.2 6.4,3.3 9.8,3.6 7.2,5.9 8.1,9.4 5,7.6 1.9,9.4 2.8,5.9 0.2,3.6 3.6,3.3" fill="url(#sg)" stroke="#f5b324" stroke-width="0.5"/><polygon transform="translate(34.65,0)" points="5,0.2 6.4,3.3 9.8,3.6 7.2,5.9 8.1,9.4 5,7.6 1.9,9.4 2.8,5.9 0.2,3.6 3.6,3.3" fill="url(#sg)" stroke="#f5b324" stroke-width="0.5"/><polygon transform="translate(46.20,0)" points="5,0.2 6.4,3.3 9.8,3.6 7.2,5.9 8.1,9.4 5,7.6 1.9,9.4 2.8,5.9 0.2,3.6 3.6,3.3" fill="url(#sg)" stroke="#f5b324" stroke-width="0.5"/></svg></div>
<div class="a" style="left:435.3px;top:265.70px">2013-02-18 11:35:38</div>
<div class="btn1" style="left:549px;top:264.70px"><span class="k">已安装</span></div>
<div class="a" style="left:0;width:41px;text-align:center;top:286.50px">11</div>
<div class="a" style="left:56.5px;top:286.50px"><u>5E<span class="k">对战平台</span></u></div>
<div class="a" style="left:121px;top:286.50px"><span class="k">游戏股票软件</span></div>
<div class="a" style="left:198.5px;top:286.50px"><u>imfirewall</u></div>
<div class="a" style="left:286.8px;width:60px;text-align:center;top:286.50px">113</div>
<div class="i" style="left:355.5px;top:287.30px"><svg width="58" height="10" viewBox="0 0 58 10"><polygon transform="translate(0.00,0)" points="5,0.2 6.4,3.3 9.8,3.6 7.2,5.9 8.1,9.4 5,7.6 1.9,9.4 2.8,5.9 0.2,3.6 3.6,3.3" fill="url(#sg)" stroke="#f5b324" stroke-width="0.5"/><polygon transform="translate(11.55,0)" points="5,0.2 6.4,3.3 9.8,3.6 7.2,5.9 8.1,9.4 5,7.6 1.9,9.4 2.8,5.9 0.2,3.6 3.6,3.3" fill="url(#sg)" stroke="#f5b324" stroke-width="0.5"/><polygon transform="translate(23.10,0)" points="5,0.2 6.4,3.3 9.8,3.6 7.2,5.9 8.1,9.4 5,7.6 1.9,9.4 2.8,5.9 0.2,3.6 3.6,3.3" fill="url(#sg)" stroke="#f5b324" stroke-width="0.5"/><polygon transform="translate(34.65,0)" points="5,0.2 6.4,3.3 9.8,3.6 7.2,5.9 8.1,9.4 5,7.6 1.9,9.4 2.8,5.9 0.2,3.6 3.6,3.3" fill="url(#sg)" stroke="#f5b324" stroke-width="0.5"/><polygon transform="translate(46.20,0)" points="5,0.2 6.4,3.3 9.8,3.6 7.2,5.9 8.1,9.4 5,7.6 1.9,9.4 2.8,5.9 0.2,3.6 3.6,3.3" fill="url(#sg)" stroke="#f5b324" stroke-width="0.5"/></svg></div>
<div class="a" style="left:435.3px;top:286.50px">2012-12-25 09:54:29</div>
<div class="btn1" style="left:549px;top:285.50px"><span class="k">已安装</span></div>
<div class="a" style="left:0;width:41px;text-align:center;top:307.30px">12</div>
<div class="a" style="left:56.5px;top:307.30px"><u><span class="k">百度云网盘</span></u></div>
<div class="a" style="left:121px;top:307.30px"><span class="k">文件传输</span></div>
<div class="a" style="left:198.5px;top:307.30px"><u>imfirewall</u></div>
<div class="a" style="left:286.8px;width:60px;text-align:center;top:307.30px">112</div>
<div class="i" style="left:355.5px;top:308.10px"><svg width="58" height="10" viewBox="0 0 58 10"><polygon transform="translate(0.00,0)" points="5,0.2 6.4,3.3 9.8,3.6 7.2,5.9 8.1,9.4 5,7.6 1.9,9.4 2.8,5.9 0.2,3.6 3.6,3.3" fill="url(#sg)" stroke="#f5b324" stroke-width="0.5"/><polygon transform="translate(11.55,0)" points="5,0.2 6.4,3.3 9.8,3.6 7.2,5.9 8.1,9.4 5,7.6 1.9,9.4 2.8,5.9 0.2,3.6 3.6,3.3" fill="url(#sg)" stroke="#f5b324" stroke-width="0.5"/><polygon transform="translate(23.10,0)" points="5,0.2 6.4,3.3 9.8,3.6 7.2,5.9 8.1,9.4 5,7.6 1.9,9.4 2.8,5.9 0.2,3.6 3.6,3.3" fill="url(#sg)" stroke="#f5b324" stroke-width="0.5"/><polygon transform="translate(34.65,0)" points="5,0.2 6.4,3.3 9.8,3.6 7.2,5.9 8.1,9.4 5,7.6 1.9,9.4 2.8,5.9 0.2,3.6 3.6,3.3" fill="url(#sg)" stroke="#f5b324" stroke-width="0.5"/><polygon transform="translate(46.20,0)" points="5,0.2 6.4,3.3 9.8,3.6 7.2,5.9 8.1,9.4 5,7.6 1.9,9.4 2.8,5.9 0.2,3.6 3.6,3.3" fill="#fff" stroke="#c9cdcd" stroke-width="0.7"/></svg></div>
<div class="a" style="left:435.3px;top:307.30px">2012-12-25 09:54:59</div>
<div class="btn1" style="left:549px;top:306.30px"><span class="k">已安装</span></div>
<div class="a" style="left:0;width:41px;text-align:center;top:328.10px">13</div>
<div class="a" style="left:56.5px;top:328.10px"><u>QQ<span class="k">邮箱超</span>…</u></div>
<div class="a" style="left:121px;top:328.10px"><span class="k">文件传输</span></div>
<div class="a" style="left:198.5px;top:328.10px"><u>imfirewall</u></div>
<div class="a" style="left:286.8px;width:60px;text-align:center;top:328.10px">112</div>
<div class="i" style="left:355.5px;top:328.90px"><svg width="58" height="10" viewBox="0 0 58 10"><polygon transform="translate(0.00,0)" points="5,0.2 6.4,3.3 9.8,3.6 7.2,5.9 8.1,9.4 5,7.6 1.9,9.4 2.8,5.9 0.2,3.6 3.6,3.3" fill="url(#sg)" stroke="#f5b324" stroke-width="0.5"/><polygon transform="translate(11.55,0)" points="5,0.2 6.4,3.3 9.8,3.6 7.2,5.9 8.1,9.4 5,7.6 1.9,9.4 2.8,5.9 0.2,3.6 3.6,3.3" fill="url(#sg)" stroke="#f5b324" stroke-width="0.5"/><polygon transform="translate(23.10,0)" points="5,0.2 6.4,3.3 9.8,3.6 7.2,5.9 8.1,9.4 5,7.6 1.9,9.4 2.8,5.9 0.2,3.6 3.6,3.3" fill="url(#sg)" stroke="#f5b324" stroke-width="0.5"/><polygon transform="translate(34.65,0)" points="5,0.2 6.4,3.3 9.8,3.6 7.2,5.9 8.1,9.4 5,7.6 1.9,9.4 2.8,5.9 0.2,3.6 3.6,3.3" fill="url(#sg)" stroke="#f5b324" stroke-width="0.5"/><polygon transform="translate(46.20,0)" points="5,0.2 6.4,3.3 9.8,3.6 7.2,5.9 8.1,9.4 5,7.6 1.9,9.4 2.8,5.9 0.2,3.6 3.6,3.3" fill="url(#sg)" stroke="#f5b324" stroke-width="0.5"/></svg></div>
<div class="a" style="left:435.3px;top:328.10px">2012-12-25 09:54:39</div>
<div class="btn1" style="left:549px;top:327.10px"><span class="k">已安装</span></div>
<div class="a" style="left:0;width:41px;text-align:center;top:348.90px">14</div>
<div class="a" style="left:56.5px;top:348.90px"><u>NestTrader</u></div>
<div class="a" style="left:121px;top:348.90px"><span class="k">游戏股票软件</span></div>
<div class="a" style="left:198.5px;top:348.90px"><u>imfirewall</u></div>
<div class="a" style="left:286.8px;width:60px;text-align:center;top:348.90px">104</div>
<div class="i" style="left:355.5px;top:349.70px"><svg width="58" height="10" viewBox="0 0 58 10"><polygon transform="translate(0.00,0)" points="5,0.2 6.4,3.3 9.8,3.6 7.2,5.9 8.1,9.4 5,7.6 1.9,9.4 2.8,5.9 0.2,3.6 3.6,3.3" fill="#fff" stroke="#c9cdcd" stroke-width="0.7"/><polygon transform="translate(11.55,0)" points="5,0.2 6.4,3.3 9.8,3.6 7.2,5.9 8.1,9.4 5,7.6 1.9,9.4 2.8,5.9 0.2,3.6 3.6,3.3" fill="#fff" stroke="#c9cdcd" stroke-width="0.7"/><polygon transform="translate(23.10,0)" points="5,0.2 6.4,3.3 9.8,3.6 7.2,5.9 8.1,9.4 5,7.6 1.9,9.4 2.8,5.9 0.2,3.6 3.6,3.3" fill="#fff" stroke="#c9cdcd" stroke-width="0.7"/><polygon transform="translate(34.65,0)" points="5,0.2 6.4,3.3 9.8,3.6 7.2,5.9 8.1,9.4 5,7.6 1.9,9.4 2.8,5.9 0.2,3.6 3.6,3.3" fill="#fff" stroke="#c9cdcd" stroke-width="0.7"/><polygon transform="translate(46.20,0)" points="5,0.2 6.4,3.3 9.8,3.6 7.2,5.9 8.1,9.4 5,7.6 1.9,9.4 2.8,5.9 0.2,3.6 3.6,3.3" fill="#fff" stroke="#c9cdcd" stroke-width="0.7"/></svg></div>
<div class="a" style="left:435.3px;top:348.90px">2012-12-25 09:55:04</div>
<div class="btn1" style="left:549px;top:347.90px"><span class="k">已安装</span></div>
<div class="a" style="left:0;width:41px;text-align:center;top:369.70px">15</div>
<div class="a" style="left:56.5px;top:369.70px"><u><span class="k">穿越火线</span></u></div>
<div class="a" style="left:121px;top:369.70px"><span class="k">游戏股票软件</span></div>
<div class="a" style="left:198.5px;top:369.70px"><u>gargoyle</u></div>
<div class="a" style="left:286.8px;width:60px;text-align:center;top:369.70px">100</div>
<div class="i" style="left:355.5px;top:370.50px"><svg width="58" height="10" viewBox="0 0 58 10"><polygon transform="translate(0.00,0)" points="5,0.2 6.4,3.3 9.8,3.6 7.2,5.9 8.1,9.4 5,7.6 1.9,9.4 2.8,5.9 0.2,3.6 3.6,3.3" fill="#fff" stroke="#c9cdcd" stroke-width="0.7"/><polygon transform="translate(11.55,0)" points="5,0.2 6.4,3.3 9.8,3.6 7.2,5.9 8.1,9.4 5,7.6 1.9,9.4 2.8,5.9 0.2,3.6 3.6,3.3" fill="#fff" stroke="#c9cdcd" stroke-width="0.7"/><polygon transform="translate(23.10,0)" points="5,0.2 6.4,3.3 9.8,3.6 7.2,5.9 8.1,9.4 5,7.6 1.9,9.4 2.8,5.9 0.2,3.6 3.6,3.3" fill="#fff" stroke="#c9cdcd" stroke-width="0.7"/><polygon transform="translate(34.65,0)" points="5,0.2 6.4,3.3 9.8,3.6 7.2,5.9 8.1,9.4 5,7.6 1.9,9.4 2.8,5.9 0.2,3.6 3.6,3.3" fill="#fff" stroke="#c9cdcd" stroke-width="0.7"/><polygon transform="translate(46.20,0)" points="5,0.2 6.4,3.3 9.8,3.6 7.2,5.9 8.1,9.4 5,7.6 1.9,9.4 2.8,5.9 0.2,3.6 3.6,3.3" fill="#fff" stroke="#c9cdcd" stroke-width="0.7"/></svg></div>
<div class="a" style="left:435.3px;top:369.70px">2013-02-18 11:35:48</div>
<div class="btn1" style="left:549px;top:368.70px"><span class="k">已安装</span></div>
<div class="a" style="left:0;width:41px;text-align:center;top:390.50px">16</div>
<div class="a" style="left:56.5px;top:390.50px"><u><span class="k">爱奇艺视频</span></u></div>
<div class="a" style="left:121px;top:390.50px"><span class="k">流媒体类</span></div>
<div class="a" style="left:198.5px;top:390.50px"><u>DaiLen</u></div>
<div class="a" style="left:286.8px;width:60px;text-align:center;top:390.50px">96</div>
<div class="i" style="left:355.5px;top:391.30px"><svg width="58" height="10" viewBox="0 0 58 10"><polygon transform="translate(0.00,0)" points="5,0.2 6.4,3.3 9.8,3.6 7.2,5.9 8.1,9.4 5,7.6 1.9,9.4 2.8,5.9 0.2,3.6 3.6,3.3" fill="#fff" stroke="#c9cdcd" stroke-width="0.7"/><polygon transform="translate(11.55,0)" points="5,0.2 6.4,3.3 9.8,3.6 7.2,5.9 8.1,9.4 5,7.6 1.9,9.4 2.8,5.9 0.2,3.6 3.6,3.3" fill="#fff" stroke="#c9cdcd" stroke-width="0.7"/><polygon transform="translate(23.10,0)" points="5,0.2 6.4,3.3 9.8,3.6 7.2,5.9 8.1,9.4 5,7.6 1.9,9.4 2.8,5.9 0.2,3.6 3.6,3.3" fill="#fff" stroke="#c9cdcd" stroke-width="0.7"/><polygon transform="translate(34.65,0)" points="5,0.2 6.4,3.3 9.8,3.6 7.2,5.9 8.1,9.4 5,7.6 1.9,9.4 2.8,5.9 0.2,3.6 3.6,3.3" fill="#fff" stroke="#c9cdcd" stroke-width="0.7"/><polygon transform="translate(46.20,0)" points="5,0.2 6.4,3.3 9.8,3.6 7.2,5.9 8.1,9.4 5,7.6 1.9,9.4 2.8,5.9 0.2,3.6 3.6,3.3" fill="#fff" stroke="#c9cdcd" stroke-width="0.7"/></svg></div>
<div class="a" style="left:435.3px;top:390.50px">2013-06-03 15:56:58</div>
<div class="btn2" style="left:548.5px;top:390.00px;width:37px;padding-left:2px"><span class="k">安装</span></div>
<div class="a" style="left:0;width:41px;text-align:center;top:411.30px">17</div>
<div class="a" style="left:56.5px;top:411.30px"><u><span class="k">酷盘</span></u></div>
<div class="a" style="left:121px;top:411.30px"><span class="k">文件传输</span></div>
<div class="a" style="left:198.5px;top:411.30px"><u>imfirewall</u></div>
<div class="a" style="left:286.8px;width:60px;text-align:center;top:411.30px">93</div>
<div class="i" style="left:355.5px;top:412.10px"><svg width="58" height="10" viewBox="0 0 58 10"><polygon transform="translate(0.00,0)" points="5,0.2 6.4,3.3 9.8,3.6 7.2,5.9 8.1,9.4 5,7.6 1.9,9.4 2.8,5.9 0.2,3.6 3.6,3.3" fill="#fff" stroke="#c9cdcd" stroke-width="0.7"/><polygon transform="translate(11.55,0)" points="5,0.2 6.4,3.3 9.8,3.6 7.2,5.9 8.1,9.4 5,7.6 1.9,9.4 2.8,5.9 0.2,3.6 3.6,3.3" fill="#fff" stroke="#c9cdcd" stroke-width="0.7"/><polygon transform="translate(23.10,0)" points="5,0.2 6.4,3.3 9.8,3.6 7.2,5.9 8.1,9.4 5,7.6 1.9,9.4 2.8,5.9 0.2,3.6 3.6,3.3" fill="#fff" stroke="#c9cdcd" stroke-width="0.7"/><polygon transform="translate(34.65,0)" points="5,0.2 6.4,3.3 9.8,3.6 7.2,5.9 8.1,9.4 5,7.6 1.9,9.4 2.8,5.9 0.2,3.6 3.6,3.3" fill="#fff" stroke="#c9cdcd" stroke-width="0.7"/><polygon transform="translate(46.20,0)" points="5,0.2 6.4,3.3 9.8,3.6 7.2,5.9 8.1,9.4 5,7.6 1.9,9.4 2.8,5.9 0.2,3.6 3.6,3.3" fill="#fff" stroke="#c9cdcd" stroke-width="0.7"/></svg></div>
<div class="a" style="left:435.3px;top:411.30px">2012-12-25 09:55:00</div>
<div class="btn1" style="left:549px;top:410.30px"><span class="k">已安装</span></div>
</div>
<div id="sb"><div style="position:absolute;left:3.5px;top:5px;width:0;height:0;border-left:3.5px solid transparent;border-right:3.5px solid transparent;border-bottom:3.5px solid #333"></div><div style="position:absolute;left:0.5px;top:14.5px;width:11.5px;height:21px;border:1px solid #a8a8a8;border-radius:2px;background:linear-gradient(90deg,#f6f6f6,#e9e9e9 50%,#d8d8d8)"></div><div style="position:absolute;left:4px;top:22px;width:4px;height:5px;border-top:1px solid #555;border-bottom:1px solid #555"></div><div style="position:absolute;left:4px;top:24px;width:4px;height:1px;background:#555"></div><div style="position:absolute;left:3.5px;top:407px;width:0;height:0;border-left:3.5px solid transparent;border-right:3.5px solid transparent;border-top:3.5px solid #333"></div></div>
</div>
</body></html>
